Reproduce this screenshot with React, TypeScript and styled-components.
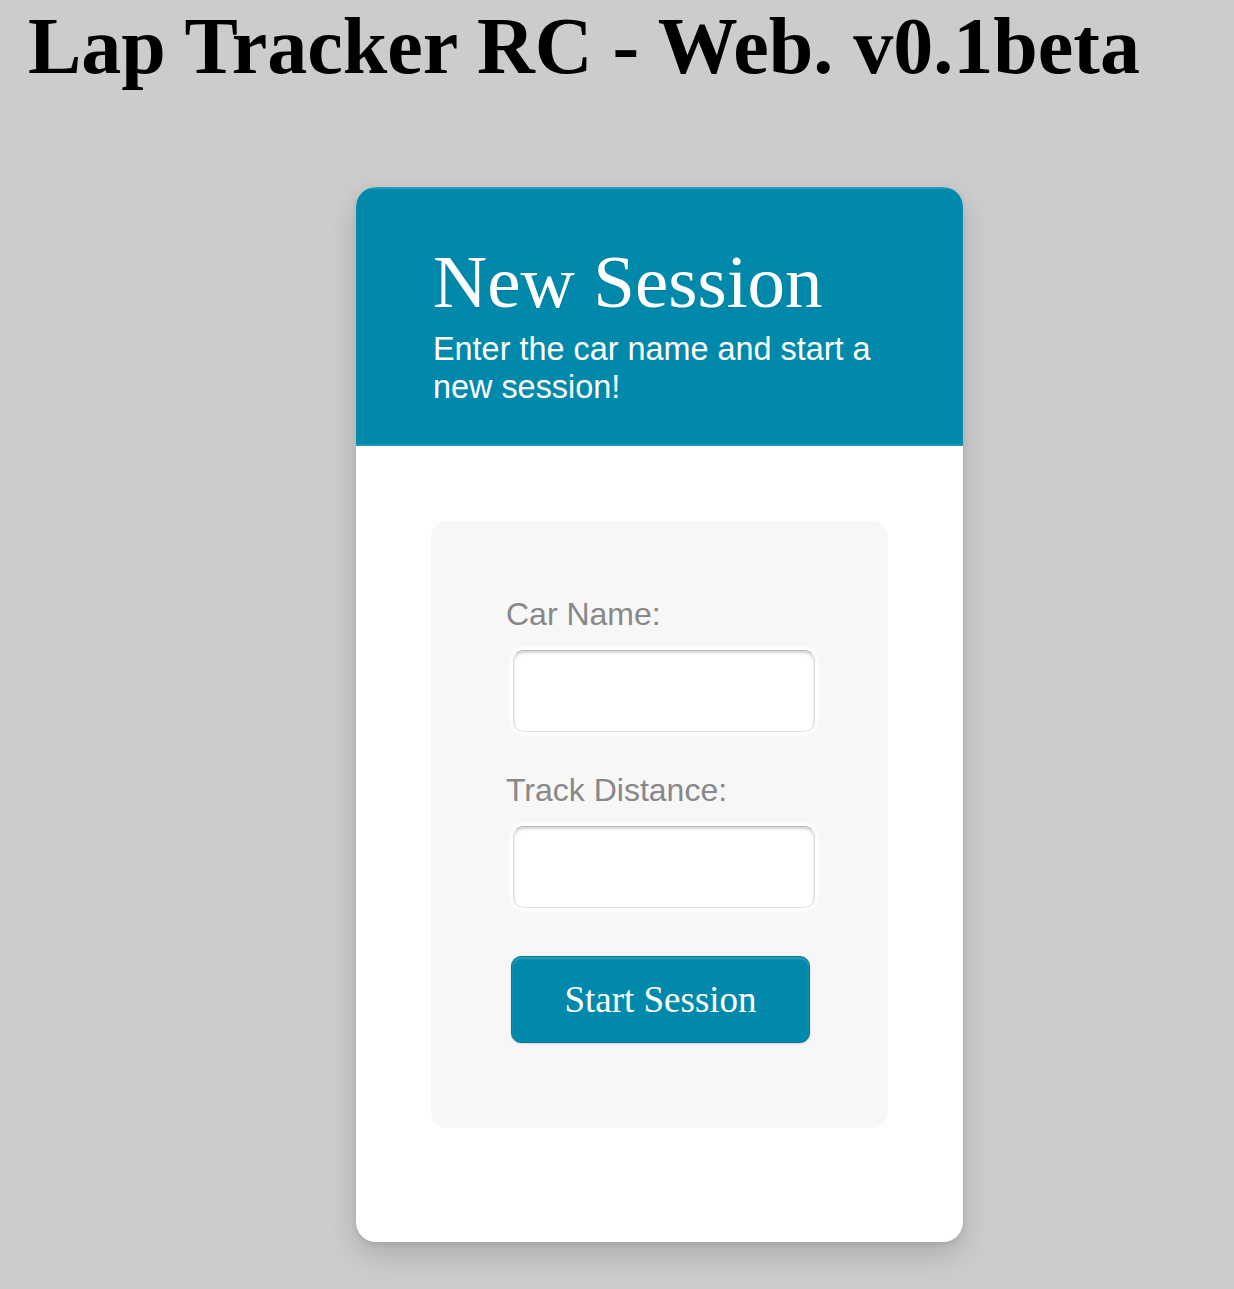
import React from "react";
import styled, { createGlobalStyle } from "styled-components";

const Global = createGlobalStyle`
  html, body {
    margin: 0;
    padding: 0;
    background: #cccccc;
  }
  body {
    min-height: 1289px;
    font-family: "Liberation Serif", "Times New Roman", serif;
  }
`;

const Page = styled.div`
  display: flex;
  flex-direction: column;
  align-items: flex-start;
  padding-bottom: 48px;
`;

const Heading = styled.h1`
  margin: 0 0 0 28px;
  font-family: "Liberation Serif", "Times New Roman", serif;
  font-weight: 700;
  font-size: 80px;
  line-height: 92px;
  color: #000;
`;

const Card = styled.section`
  margin: 95px 0 0 356px;
  width: 607px;
  background: #ffffff;
  border-radius: 20px;
  box-shadow: 0 12px 28px rgba(0, 0, 0, 0.16), 0 2px 6px rgba(0, 0, 0, 0.08);
  overflow: hidden;
  display: flex;
  flex-direction: column;
`;

const CardHeader = styled.header`
  background: #0189ab;
  padding: 58px 40px 40px 77px;
  box-shadow: inset 0 2px 2px rgba(255, 255, 255, 0.18), inset 0 -2px 0 rgba(255, 255, 255, 0.12);
  display: flex;
  flex-direction: column;
  gap: 11px;
`;

const Title = styled.h2`
  margin: 0;
  font-family: "Liberation Serif", "Times New Roman", serif;
  font-weight: 400;
  font-size: 75px;
  line-height: 74px;
  color: #ffffff;
  text-shadow: 0 1px 2px rgba(0, 0, 0, 0.1);
`;

const Subtitle = styled.p`
  margin: 0;
  font-family: "Liberation Sans", Arial, sans-serif;
  font-size: 32.4px;
  line-height: 38px;
  color: #ffffff;
`;

const CardBody = styled.div`
  padding: 75px 75px 114px 75px;
`;

const Panel = styled.form`
  background: #f7f7f7;
  border-radius: 16px;
  padding: 74px 75px 85px 75px;
  display: flex;
  flex-direction: column;
`;

const Field = styled.div<{ $gap: number }>`
  display: flex;
  flex-direction: column;
  align-items: flex-start;
  margin-bottom: ${(p) => p.$gap}px;
`;

const Label = styled.label`
  font-family: "Liberation Sans", Arial, sans-serif;
  font-size: 32px;
  line-height: 38px;
  color: #888888;
  margin-bottom: 17px;
`;

const Input = styled.input`
  box-sizing: border-box;
  margin-left: 7px;
  width: 302px;
  height: 82px;
  border: 1px solid #dddddd;
  border-top-color: #bbbbbb;
  border-radius: 10px;
  background: #ffffff;
  box-shadow: inset 0 2px 3px rgba(0, 0, 0, 0.18), 0 0 3px 3px rgba(255, 255, 255, 0.95);
  outline: none;
  font-size: 28px;
  padding: 0 12px;
`;

const Button = styled.button`
  box-sizing: border-box;
  align-self: flex-start;
  margin-left: 5px;
  width: 299px;
  height: 87px;
  border: 1px solid #017a97;
  border-radius: 10px;
  background: #0189ab;
  box-shadow: inset 0 2px 2px rgba(255, 255, 255, 0.18), 0 1px 2px rgba(0, 0, 0, 0.12);
  color: #ffffff;
  font-family: "Liberation Serif", "Times New Roman", serif;
  font-size: 37px;
  cursor: pointer;
  padding: 0;
`;

export default function App() {
  return (
    <>
      <Global />
      <Page>
        <Heading>Lap Tracker RC - Web. v0.1beta</Heading>
        <Card>
          <CardHeader>
            <Title>New Session</Title>
            <Subtitle>
              Enter the car name and start a
              <br />
              new session!
            </Subtitle>
          </CardHeader>
          <CardBody>
            <Panel onSubmit={(e) => e.preventDefault()}>
              <Field $gap={39}>
                <Label htmlFor="car">Car Name:</Label>
                <Input id="car" type="text" />
              </Field>
              <Field $gap={48}>
                <Label htmlFor="dist">Track Distance:</Label>
                <Input id="dist" type="text" />
              </Field>
              <Button type="submit">Start Session</Button>
            </Panel>
          </CardBody>
        </Card>
      </Page>
    </>
  );
}
